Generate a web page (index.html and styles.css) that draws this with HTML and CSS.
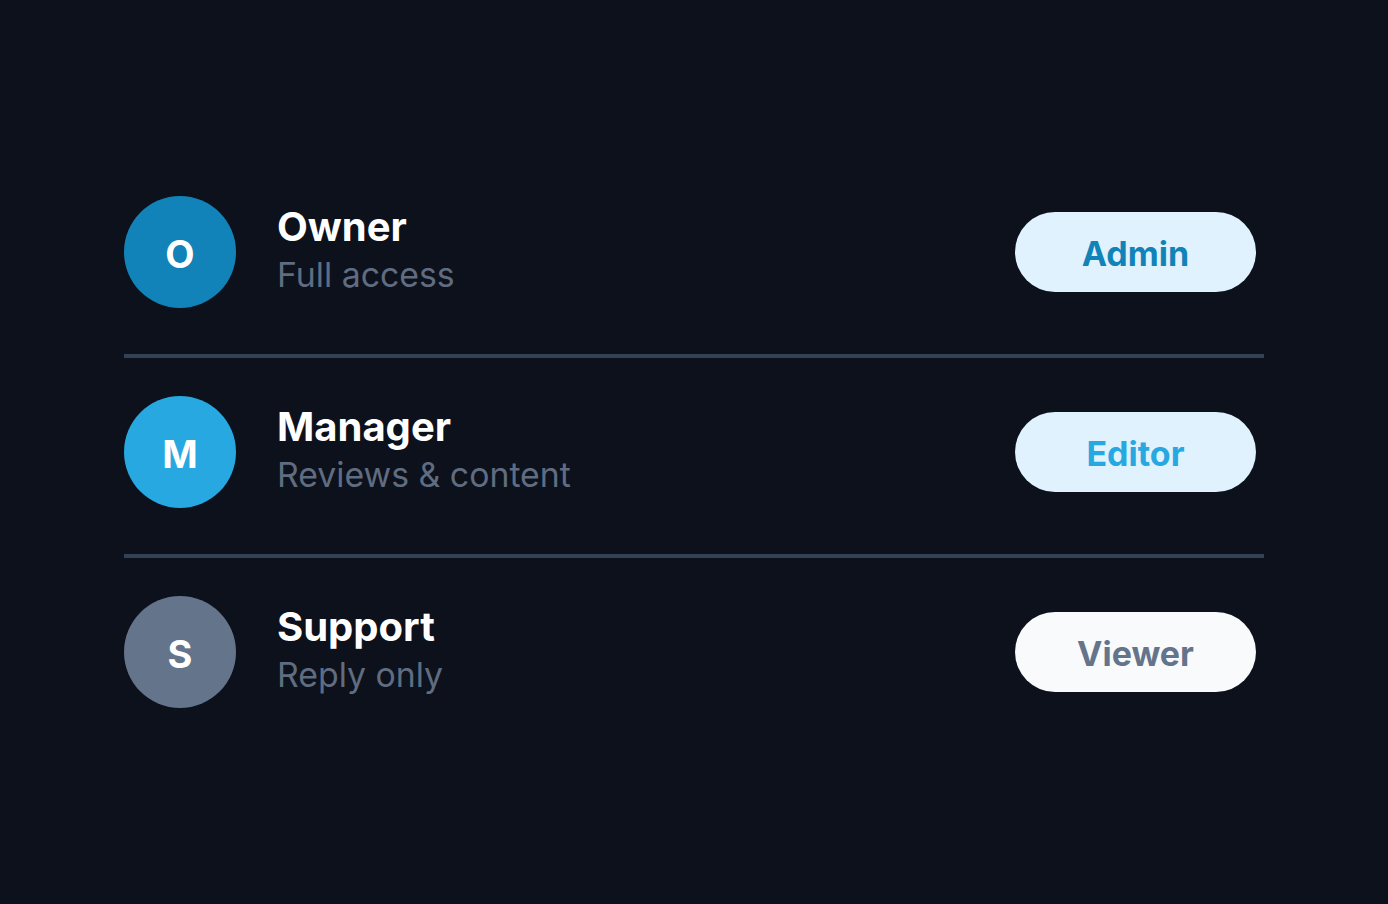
FILE: index.html
```html
<!DOCTYPE html>
<html lang="en">
<head>
<meta charset="utf-8">
<title>Roles</title>
<link rel="stylesheet" href="styles.css">
</head>
<body>
<main class="page">
  <ul class="roles">
    <li class="role">
      <div class="avatar avatar-owner">O</div>
      <div class="info">
        <div class="title">Owner</div>
        <div class="sub">Full access</div>
      </div>
      <span class="pill pill-admin">Admin</span>
    </li>
    <li class="role">
      <div class="avatar avatar-manager">M</div>
      <div class="info">
        <div class="title">Manager</div>
        <div class="sub">Reviews &amp; content</div>
      </div>
      <span class="pill pill-editor">Editor</span>
    </li>
    <li class="role">
      <div class="avatar avatar-support">S</div>
      <div class="info">
        <div class="title">Support</div>
        <div class="sub">Reply only</div>
      </div>
      <span class="pill pill-viewer">Viewer</span>
    </li>
  </ul>
</main>
</body>
</html>
```

FILE: styles.css
```css
* { box-sizing: border-box; }
html, body { margin: 0; padding: 0; }
body {
  background: #0c111c;
  font-family: Inter, "Noto Sans", sans-serif;
  color: #ffffff;
  width: 1388px;
  height: 904px;
  overflow: hidden;
}
.page {
  height: 904px;
  display: flex;
  align-items: center;
  justify-content: center;
}
.roles {
  list-style: none;
  margin: 0;
  padding: 0;
  width: 1140px;
  display: flex;
  flex-direction: column;
}
.role {
  display: flex;
  align-items: center;
  padding: 38px 8px 46px 0;
  border-bottom: 4px solid #334155;
}
.role:first-child { padding-top: 0; }
.role:last-child { padding-bottom: 0; border-bottom: none; }
.avatar {
  width: 112px;
  height: 112px;
  border-radius: 50%;
  flex: none;
  display: flex;
  align-items: center;
  justify-content: center;
  font-weight: 700;
  font-size: 38px;
  line-height: 1;
  color: #ffffff;
  padding-top: 3px;
}
.avatar-owner { background: #1283b8; }
.avatar-manager { background: #27a8e0; }
.avatar-support { background: #64748b; }
.info {
  flex: 1;
  margin-left: 41px;
  display: flex;
  flex-direction: column;
}
.title {
  font-size: 40px;
  font-weight: 700;
  line-height: 45px;
}
.sub {
  font-size: 33.8px;
  line-height: 51px;
  color: #606c80;
}
.pill {
  flex: none;
  width: 241px;
  height: 80px;
  border-radius: 40px;
  display: flex;
  align-items: center;
  justify-content: center;
  font-size: 34px;
  font-weight: 700;
  line-height: 1;
  padding-top: 3px;
}
.pill-admin { background: #e0f2fe; color: #1283b8; }
.pill-editor { background: #e0f2fe; color: #27a8e0; }
.pill-viewer { background: #f8fafc; color: #64748b; }
```
